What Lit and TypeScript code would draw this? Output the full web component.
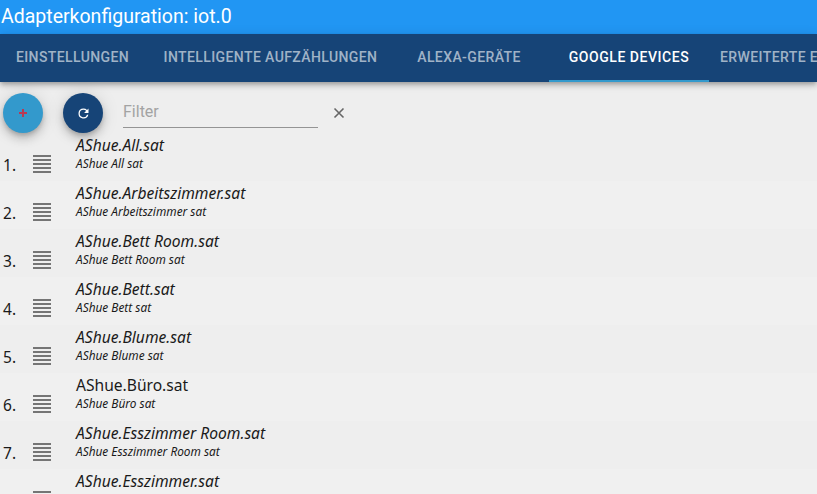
import { LitElement, html, css, svg } from "lit";
import { customElement } from "lit/decorators.js";

const rows = [
  ["AShue.All.sat", "AShue All sat", true],
  ["AShue.Arbeitszimmer.sat", "AShue Arbeitszimmer sat", true],
  ["AShue.Bett Room.sat", "AShue Bett Room sat", true],
  ["AShue.Bett.sat", "AShue Bett sat", true],
  ["AShue.Blume.sat", "AShue Blume sat", true],
  ["AShue.Büro.sat", "AShue Büro sat", false],
  ["AShue.Esszimmer Room.sat", "AShue Esszimmer Room sat", true],
  ["AShue.Esszimmer.sat", "AShue Esszimmer sat", true],
] as const;

@customElement("app-root")
export class AppRoot extends LitElement {
  static styles = css`
    :host { display: block; width: 817px; height: 494px; overflow: hidden; background: #eeeeee; font-family: Roboto, sans-serif; position: relative; }
    .title { height: 34px; background: #2196f3; color: #fff; font-size: 19.5px; line-height: 34px; padding-left: 1px; box-sizing: border-box; white-space: nowrap; }
    .tabs { height: 48px; background: #164477; display: flex; box-shadow: 0 2px 4px -1px rgba(0,0,0,.2), 0 4px 5px 0 rgba(0,0,0,.14), 0 1px 10px 0 rgba(0,0,0,.12); position: relative; z-index: 2; overflow: hidden; }
    .tab { flex: none; box-sizing: border-box; height: 48px; line-height: 46px; font-size: 14px; font-weight: 500; letter-spacing: .4px; color: rgba(255,255,255,.6); text-align: center; white-space: nowrap; }
    .t1 { width: 145px; } .t2 { width: 237px; margin-left: 7px; } .t3 { width: 160px; } .t4 { width: 160px; color: #fff; border-bottom: 2px solid #3399cc; letter-spacing: .55px; }
    .t5 { padding-left: 11px; }
    .toolbar { height: 51px; display: flex; align-items: flex-start; padding: 11px 0 0 3px; box-sizing: border-box; }
    .fab { width: 40px; height: 40px; border-radius: 50%; display: flex; align-items: center; justify-content: center; box-shadow: 0 3px 5px -1px rgba(0,0,0,.2), 0 6px 10px 0 rgba(0,0,0,.14), 0 1px 18px 0 rgba(0,0,0,.12); flex: none; }
    .add { background: #3399cc; margin-right: 20px; }
    .refresh { background: #164477; margin-right: 20px; }
    .filter { width: 195px; height: 35px; box-sizing: border-box; border-bottom: 1px solid #949494; font-size: 16px; color: #a3a3a3; line-height: 18px; padding-top: 10px; }
    .clear { margin: 14px 0 0 15px; display: block; }
    .row { height: 48px; display: flex; align-items: flex-start; color: #1a1a1a; font-family: "Noto Sans", sans-serif; }
    .row:nth-child(even) { background: #f0f0f0; }
    .num { width: 33px; flex: none; padding: 21px 0 0 3px; box-sizing: border-box; font-size: 15.5px; line-height: 22px; }
    .menu { display: block; margin-top: 22px; flex: none; }
    .text { margin-left: 25px; padding-top: 2px; }
    .name { font-size: 15.6px; line-height: 20px; white-space: nowrap; }
    .sub { font-size: 11.85px; line-height: 14px; margin-top: 1px; font-style: italic; white-space: nowrap; }
    .it { font-style: italic; }
  `;

  private menuIcon() {
    const ys = [0, 4, 8, 12, 16];
    return html`<svg class="menu" width="18" height="18" viewBox="0 0 18 18">
      ${ys.map((y) => svg`<rect x="0" y=${y} width="18" height="2" fill="#757575"></rect>`)}
    </svg>`;
  }

  render() {
    return html`
      <div class="title">Adapterkonfiguration: iot.0</div>
      <div class="tabs">
        <div class="tab t1">EINSTELLUNGEN</div>
        <div class="tab t2">INTELLIGENTE AUFZÄHLUNGEN</div>
        <div class="tab t3">ALEXA-GERÄTE</div>
        <div class="tab t4">GOOGLE DEVICES</div>
        <div class="tab t5">ERWEITERTE EINSTELLUNGEN</div>
      </div>
      <div class="toolbar">
        <div class="fab add"><svg width="10" height="10" viewBox="0 0 10 10"><path d="M1 5h8M5 1v8" stroke="#b83a55" stroke-width="2" fill="none"/></svg></div>
        <div class="fab refresh"><svg width="15" height="15" viewBox="0 0 24 24"><path fill="#fff" d="M17.65 6.35A7.95 7.95 0 0 0 12 4a8 8 0 1 0 7.73 10h-2.08A6 6 0 1 1 12 6c1.66 0 3.14.69 4.22 1.78L13 11h7V4l-2.35 2.35z"/></svg></div>
        <div class="filter">Filter</div>
        <svg class="clear" width="12" height="12" viewBox="0 0 12 12"><path d="M1.5 1.5l9 9M10.5 1.5l-9 9" stroke="#666" stroke-width="1.6" fill="none"/></svg>
      </div>
      <div class="list">
        ${rows.map(([name, sub, it], i) => html`
          <div class="row">
            <div class="num">${i + 1}.</div>
            ${this.menuIcon()}
            <div class="text">
              <div class="name ${it ? "it" : ""}">${name}</div>
              <div class="sub">${sub}</div>
            </div>
          </div>`)}
      </div>
    `;
  }
}
